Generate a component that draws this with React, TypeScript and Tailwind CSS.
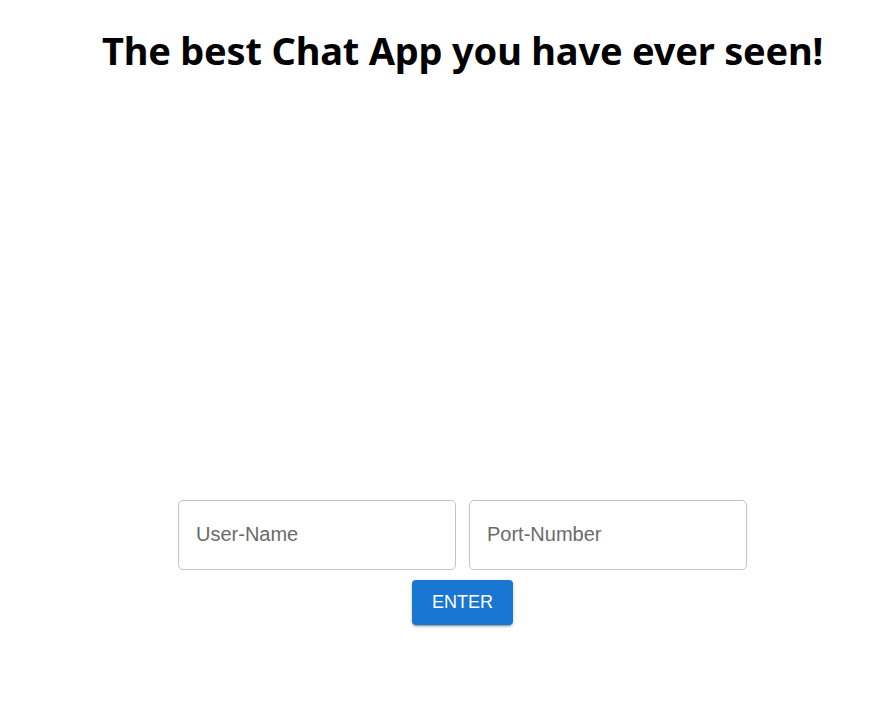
export default function App() {
  return (
    <div className="min-h-[712px] bg-white pl-[33px] font-['Noto_Sans',sans-serif]">
      <h1 className="pt-[23px] text-center text-[38px] font-bold leading-[55px] tracking-[-0.2px] text-black">
        The best Chat App you have ever seen!
      </h1>
      <div className="mt-[422px] flex flex-col items-center">
        <div className="flex gap-[13px]">
          <input
            placeholder="User-Name"
            className="h-[70px] w-[278px] rounded-[5px] border border-[#c4c4c4] px-[17px] pb-[2px] font-['Liberation_Sans',sans-serif] text-[20px] text-[#212121] outline-none placeholder:text-[#6b6b6b]"
          />
          <input
            placeholder="Port-Number"
            className="h-[70px] w-[278px] rounded-[5px] border border-[#c4c4c4] px-[17px] pb-[2px] font-['Liberation_Sans',sans-serif] text-[20px] text-[#212121] outline-none placeholder:text-[#6b6b6b]"
          />
        </div>
        <button className="mt-[10px] h-[45px] w-[101px] rounded-[4px] bg-[#1976d2] font-['Liberation_Sans',sans-serif] text-[18px] uppercase text-white shadow-[0_3px_1px_-2px_rgba(0,0,0,0.2),0_2px_2px_0_rgba(0,0,0,0.14),0_1px_5px_0_rgba(0,0,0,0.12)]">
          Enter
        </button>
      </div>
    </div>
  );
}
